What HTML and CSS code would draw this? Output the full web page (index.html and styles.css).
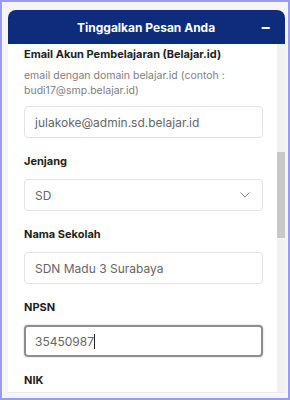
FILE: index.html
```html
<!DOCTYPE html>
<html lang="en">
<head>
    <meta charset="UTF-8">
    <meta name="viewport" content="width=device-width, initial-scale=1.0">
    <title>Tinggalkan Pesan Anda</title>
    <link rel="stylesheet" href="styles.css">
</head>
<body>
    <div class="frame">
        <div class="card">
            <div class="card-header">
                <h2>Tinggalkan Pesan Anda</h2>
                <span class="toggle">&minus;</span>
            </div>
            <div class="card-body">
                <div class="form">
                    <!-- Email -->
                    <div class="field">
                        <label>Email Akun Pembelajaran (Belajar.id)</label>
                        <p class="hint">email dengan domain belajar.id (contoh : budi17@smp.belajar.id)</p>
                        <div class="input">julakoke@admin.sd.belajar.id</div>
                    </div>

                    <!-- Jenjang -->
                    <div class="field">
                        <label>Jenjang</label>
                        <div class="input select">
                            <span>SD</span>
                            <svg width="10" height="6" viewBox="0 0 10 6"><path d="M0.5 0.5l4.5 4.5 4.5-4.5" fill="none" stroke="#888" stroke-width="1"/></svg>
                        </div>
                    </div>

                    <!-- Nama Sekolah -->
                    <div class="field">
                        <label>Nama Sekolah</label>
                        <div class="input">SDN Madu 3 Surabaya</div>
                    </div>

                    <!-- NPSN -->
                    <div class="field">
                        <label>NPSN</label>
                        <div class="input focus">35450987<span class="caret"></span></div>
                    </div>

                    <div class="field">
                        <label>NIK</label>
                    </div>
                </div>
                <div class="scrollbar">
                    <div class="thumb"></div>
                </div>
            </div>
        </div>
    </div>
</body>
</html>
```

FILE: styles.css
```css
body {
    margin: 0;
    font-family: Inter, "Noto Sans", sans-serif;
    background: #fff;
}
.frame {
    width: 290px;
    height: 400px;
    box-sizing: border-box;
    border: 2px solid #9a9af2;
    background: #f5f5f7;
    padding: 8px 3px 5px 6px;
    display: flex;
    flex-direction: column;
}
.card {
    flex: 1;
    display: flex;
    flex-direction: column;
    background: #fff;
    border-radius: 8px 8px 0 0;
    overflow: hidden;
    border-bottom: 1px solid #e6e6e6;
}
.card-header {
    background: #0e2c7c;
    color: #fff;
    height: 34px;
    display: flex;
    align-items: center;
    padding: 0 14px 0 16px;
}
.card-header h2 {
    flex: 1;
    margin: 0;
    text-align: center;
    font-size: 12px;
    font-weight: bold;
    padding-left: 8px;
}
.toggle {
    font-size: 16px;
    font-weight: bold;
    line-height: 1;
}
.card-body {
    flex: 1;
    display: flex;
    min-height: 0;
}
.form {
    flex: 1;
    padding: 1px 14px 0 16px;
    overflow: hidden;
}
.field {
    margin-bottom: 14px;
}
.field label {
    display: block;
    font-size: 11px;
    font-weight: bold;
    color: #1e1e1e;
    line-height: 18px;
    margin-bottom: 9px;
}
.hint {
    margin: -4px 0 8px;
    font-size: 10.5px;
    line-height: 15px;
    color: #808080;
}
.input {
    height: 32px;
    box-sizing: border-box;
    border: 1px solid #e3e3e3;
    border-radius: 4px;
    padding: 0 10px;
    display: flex;
    align-items: center;
    font-size: 12px;
    color: #666;
}
.select {
    justify-content: space-between;
    padding-right: 12px;
}
.focus {
    border: 2px solid #8e8e8e;
    box-shadow: 0 0 2px rgba(0, 0, 0, 0.25);
    padding-left: 9px;
}
.caret {
    display: inline-block;
    width: 1px;
    height: 15px;
    background: #222;
}
.scrollbar {
    width: 8px;
    background: #f1f1f1;
    padding-top: 108px;
}
.thumb {
    height: 86px;
    background: #c8c8c8;
}
```
